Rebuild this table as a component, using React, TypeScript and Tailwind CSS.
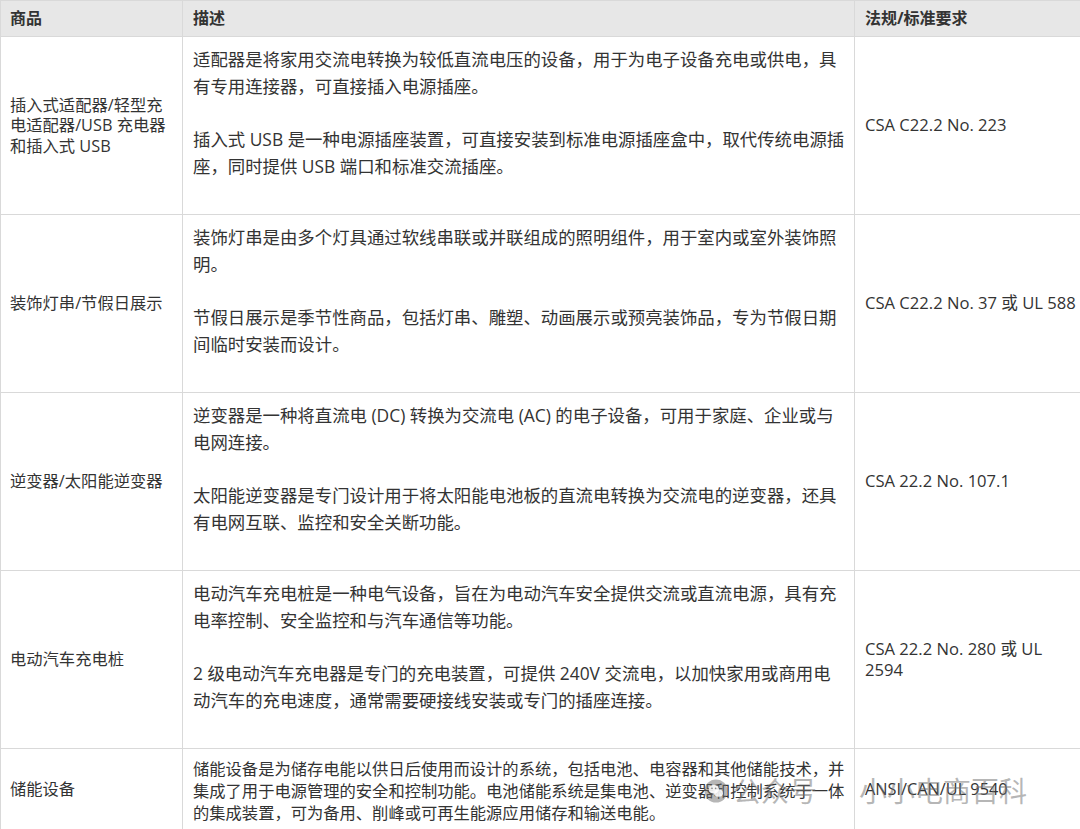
import React from "react";

type Row = {
  product: string;
  desc: string[];
  standard: string;
};

const rows: Row[] = [
  {
    product: "插入式适配器/轻型充电适配器/USB 充电器和插入式 USB",
    desc: [
      "适配器是将家用交流电转换为较低直流电压的设备，用于为电子设备充电或供电，具有专用连接器，可直接插入电源插座。",
      "插入式 USB 是一种电源插座装置，可直接安装到标准电源插座盒中，取代传统电源插座，同时提供 USB 端口和标准交流插座。",
    ],
    standard: "CSA C22.2 No. 223",
  },
  {
    product: "装饰灯串/节假日展示",
    desc: [
      "装饰灯串是由多个灯具通过软线串联或并联组成的照明组件，用于室内或室外装饰照明。",
      "节假日展示是季节性商品，包括灯串、雕塑、动画展示或预亮装饰品，专为节假日期间临时安装而设计。",
    ],
    standard: "CSA C22.2 No. 37 或 UL 588",
  },
  {
    product: "逆变器/太阳能逆变器",
    desc: [
      "逆变器是一种将直流电 (DC) 转换为交流电 (AC) 的电子设备，可用于家庭、企业或与电网连接。",
      "太阳能逆变器是专门设计用于将太阳能电池板的直流电转换为交流电的逆变器，还具有电网互联、监控和安全关断功能。",
    ],
    standard: "CSA 22.2 No. 107.1",
  },
  {
    product: "电动汽车充电桩",
    desc: [
      "电动汽车充电桩是一种电气设备，旨在为电动汽车安全提供交流或直流电源，具有充电率控制、安全监控和与汽车通信等功能。",
      "2 级电动汽车充电器是专门的充电装置，可提供 240V 交流电，以加快家用或商用电动汽车的充电速度，通常需要硬接线安装或专门的插座连接。",
    ],
    standard: "CSA 22.2 No. 280 或 UL 2594",
  },
];

// 公众号水印
const Watermark = () => (
  <div className="pointer-events-none absolute left-[704px] top-[777px] flex items-center text-[28px] leading-[28px] text-[rgba(110,110,110,0.5)]">
    <svg width="24" height="24" viewBox="0 0 24 24" className="mr-[5px]">
      <circle cx="12" cy="12" r="11.5" fill="rgba(110,110,110,0.5)" />
      <ellipse cx="9.8" cy="10.2" rx="5.2" ry="4.3" fill="rgba(255,255,255,0.85)" />
      <ellipse cx="14.6" cy="14.2" rx="4.3" ry="3.6" fill="rgba(255,255,255,0.85)" />
      <circle cx="8" cy="9.4" r="0.8" fill="rgba(110,110,110,0.8)" />
      <circle cx="11.6" cy="9.4" r="0.8" fill="rgba(110,110,110,0.8)" />
    </svg>
    <span>公众号</span>
    <span className="w-[42px] text-center">·</span>
    <span>小小电商百科</span>
  </div>
);

export default function App() {
  return (
    <div
      className="relative w-[1080px] h-[829px] overflow-hidden bg-white text-[#333]"
      style={{ fontFamily: '"Open Sans", "Noto Sans CJK SC", sans-serif' }}
    >
      <table className="w-[1080px] table-fixed border-collapse">
        <colgroup>
          <col className="w-[182px]" />
          <col className="w-[672px]" />
          <col className="w-[226px]" />
        </colgroup>
        <thead>
          <tr className="bg-[#e7e7e7] text-left text-[16px] font-bold leading-[21px] text-[#333]">
            <th className="border border-[#d9d9d9] px-[9px] py-[7px]">商品</th>
            <th className="border border-[#d9d9d9] px-[10px] py-[7px]">描述</th>
            <th className="border border-[#d9d9d9] px-[10px] py-[7px]">法规/标准要求</th>
          </tr>
        </thead>
        <tbody className="text-[17.4px]">
          {rows.map((r) => (
            <tr key={r.product}>
              <td className="border border-[#d9d9d9] pl-[9px] pr-[6px] align-middle text-[16.3px] leading-[20.5px]">
                {r.product}
              </td>
              <td className="border border-[#d9d9d9] pl-[10px] pr-[8px] pt-[9px] pb-[8px] align-top leading-[27px]">
                {r.desc.map((p) => (
                  <p key={p} className="mb-[26px]">{p}</p>
                ))}
              </td>
              <td className="border border-[#d9d9d9] pl-[10px] pr-0 align-middle text-[16.6px] leading-[20.5px]">
                {r.standard}
              </td>
            </tr>
          ))}
          <tr className="text-[16.3px]">
            <td className="border border-[#d9d9d9] pl-[9px] pr-[6px] align-middle leading-[22px]">储能设备</td>
            <td className="border border-[#d9d9d9] pl-[10px] pr-[6px] pt-[9px] pb-[5px] align-top leading-[22px]">
              储能设备是为储存电能以供日后使用而设计的系统，包括电池、电容器和其他储能技术，并集成了用于电源管理的安全和控制功能。电池储能系统是集电池、逆变器和控制系统于一体的集成装置，可为备用、削峰或可再生能源应用储存和输送电能。
            </td>
            <td className="border border-[#d9d9d9] pl-[10px] pr-0 align-middle leading-[22px]">ANSI/CAN/UL 9540</td>
          </tr>
        </tbody>
      </table>
      <Watermark />
    </div>
  );
}
